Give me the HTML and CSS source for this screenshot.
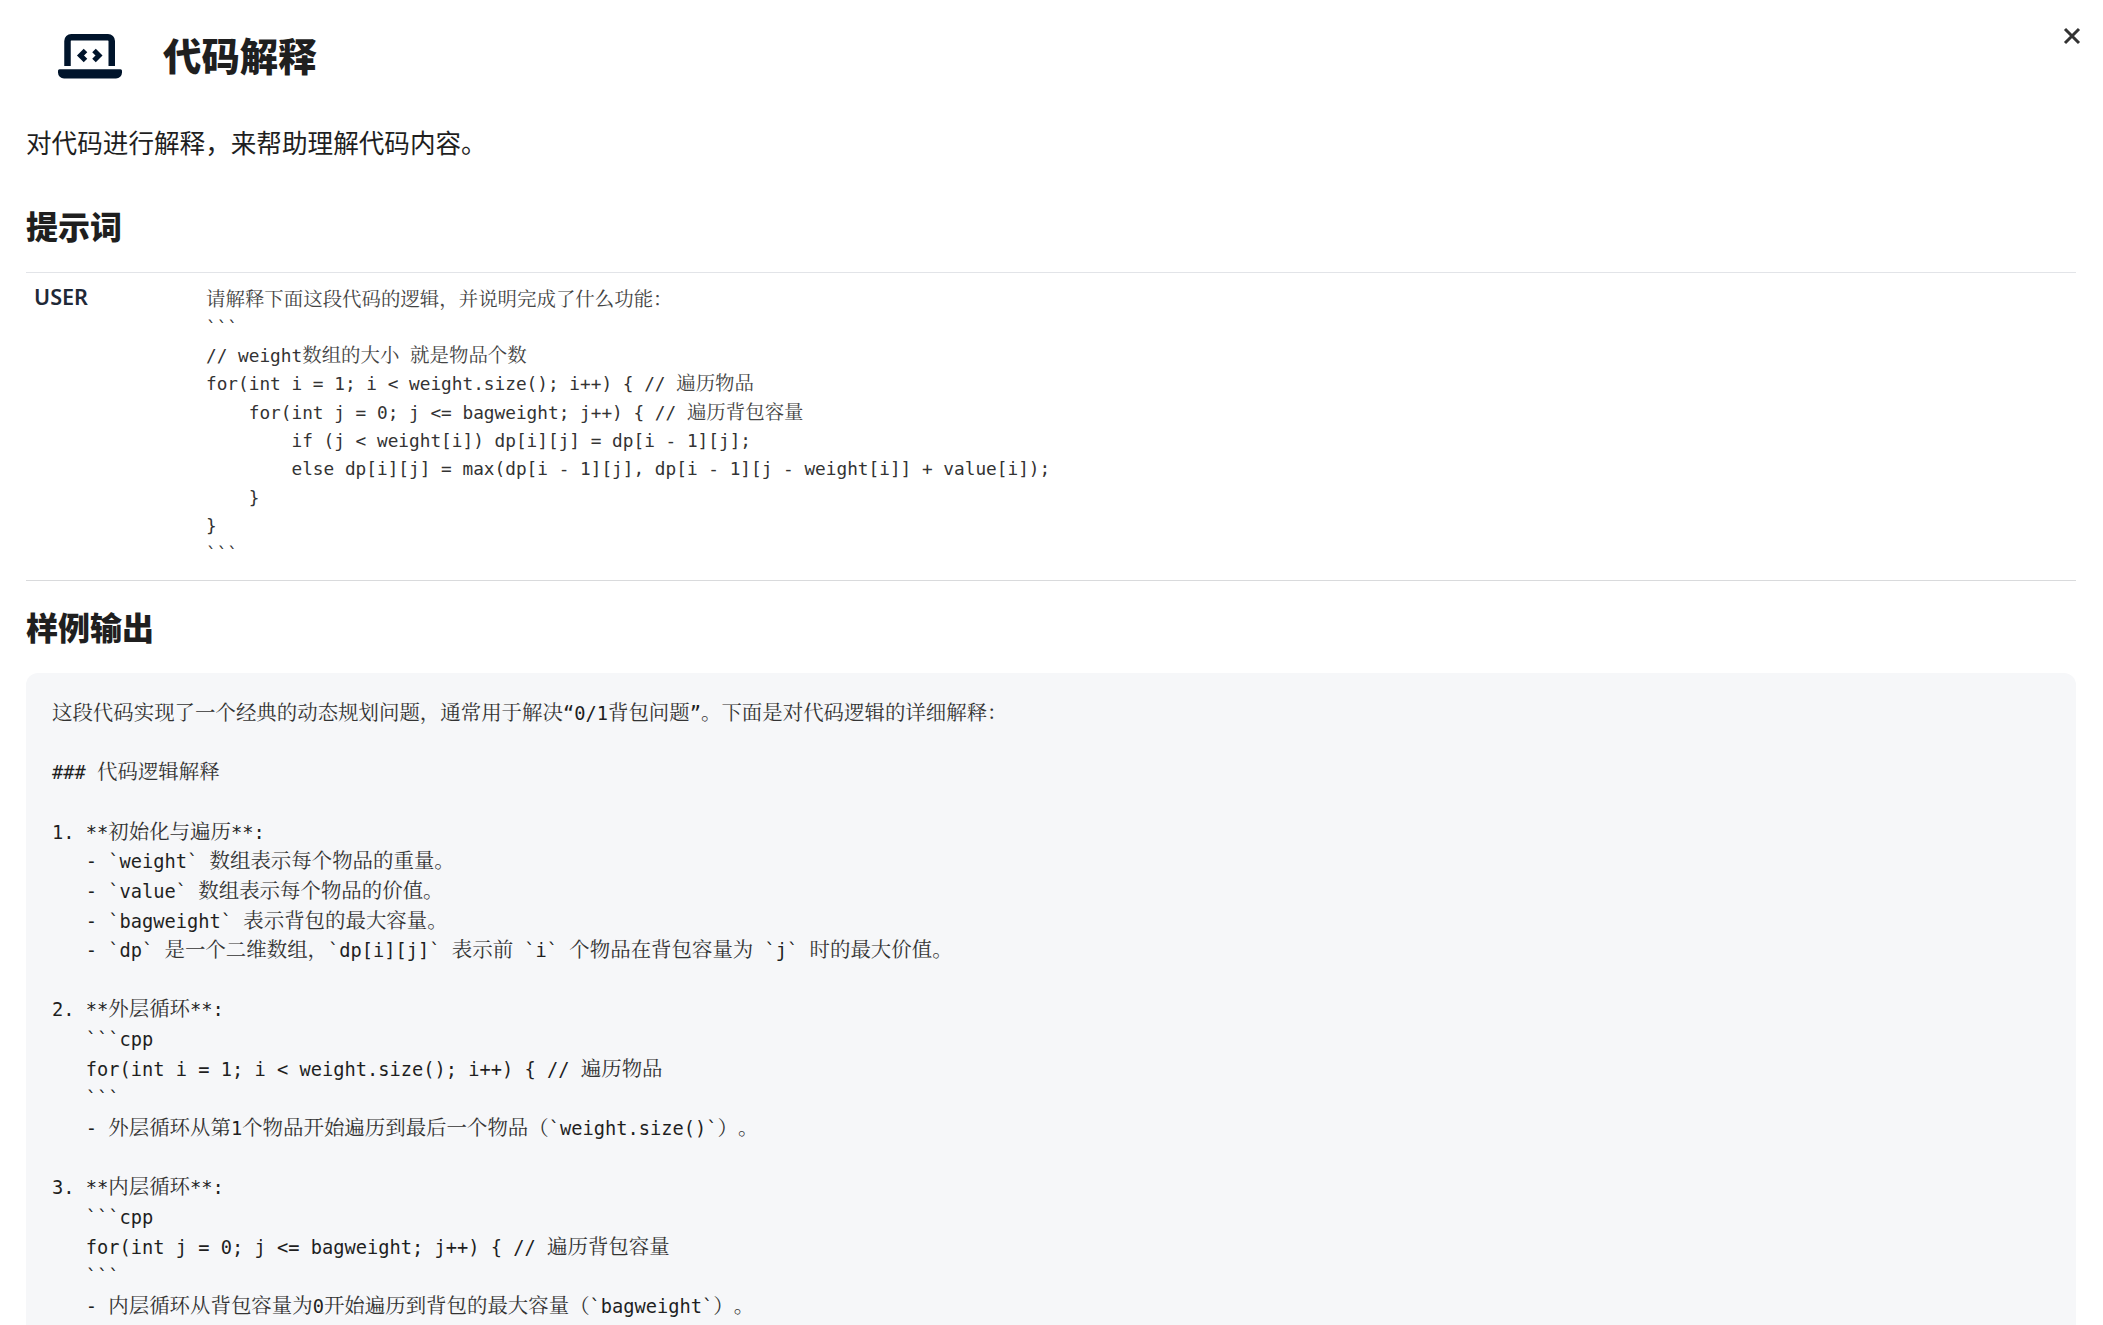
FILE: index.html
```html
<!DOCTYPE html>
<html lang="zh-CN">
<head>
<meta charset="utf-8">
<title>代码解释</title>
<link rel="stylesheet" href="styles.css">
</head>
<body>
<main class="page">
  <button class="close" type="button" aria-label="关闭">
    <svg viewBox="0 0 18 18" width="18" height="18"><path d="M2 2 16 16M16 2 2 16" fill="none" stroke="#333" stroke-width="3"/></svg>
  </button>
  <header class="head">
    <span class="logo">
      <svg viewBox="0 0 64 46" width="64" height="46">
        <path d="M9.500 33V8a3.750 3.750 0 0 1 3.750-3.750h36.750a3.750 3.750 0 0 1 3.750 3.750V33" fill="none" stroke="#00142b" stroke-width="6.500"/>
        <path d="M1.500 36.300h61a1.500 1.500 0 0 1 1.500 1.500v1.700a6 6 0 0 1-6 6H6a6 6 0 0 1-6-6v-1.700a1.500 1.500 0 0 1 1.500-1.500z" fill="#00142b"/>
        <path d="M27.500 17.500l-5 5 5 5M36 17.500l5 5-5 5" fill="none" stroke="#00142b" stroke-width="5"/>
      </svg>
    </span>
    <h1 class="title">代码解释</h1>
  </header>
  <p class="desc">对代码进行解释，来帮助理解代码内容。</p>
  <h2 class="section">提示词</h2>
  <div class="prompt">
    <div class="role">USER</div>
    <div class="code">
      <div class="ln"><i>请解释下面这段代码的逻辑，并说明完成了什么功能：</i></div>
      <div class="ln">&#96;&#96;&#96;</div>
      <div class="ln">// weight<i>数组的大小</i> <i>就是物品个数</i></div>
      <div class="ln">for(int i = 1; i &lt; weight.size(); i++) { // <i>遍历物品</i></div>
      <div class="ln">    for(int j = 0; j &lt;= bagweight; j++) { // <i>遍历背包容量</i></div>
      <div class="ln">        if (j &lt; weight[i]) dp[i][j] = dp[i - 1][j];</div>
      <div class="ln">        else dp[i][j] = max(dp[i - 1][j], dp[i - 1][j - weight[i]] + value[i]);</div>
      <div class="ln">    }</div>
      <div class="ln">}</div>
      <div class="ln">&#96;&#96;&#96;</div>
    </div>
  </div>
  <h2 class="section output">样例输出</h2>
  <div class="sample">
    <div class="ln"><i>这段代码实现了一个经典的动态规划问题，通常用于解决</i>“0/1<i>背包问题</i>”<i>。下面是对代码逻辑的详细解释：</i></div>
    <div class="ln"></div>
    <div class="ln">### <i>代码逻辑解释</i></div>
    <div class="ln"></div>
    <div class="ln">1. **<i>初始化与遍历</i>**:</div>
    <div class="ln">   - &#96;weight&#96; <i>数组表示每个物品的重量。</i></div>
    <div class="ln">   - &#96;value&#96; <i>数组表示每个物品的价值。</i></div>
    <div class="ln">   - &#96;bagweight&#96; <i>表示背包的最大容量。</i></div>
    <div class="ln">   - &#96;dp&#96; <i>是一个二维数组，</i>&#96;dp[i][j]&#96; <i>表示前</i> &#96;i&#96; <i>个物品在背包容量为</i> &#96;j&#96; <i>时的最大价值。</i></div>
    <div class="ln"></div>
    <div class="ln">2. **<i>外层循环</i>**:</div>
    <div class="ln">   &#96;&#96;&#96;cpp</div>
    <div class="ln">   for(int i = 1; i &lt; weight.size(); i++) { // <i>遍历物品</i></div>
    <div class="ln">   &#96;&#96;&#96;</div>
    <div class="ln">   - <i>外层循环从第</i>1<i>个物品开始遍历到最后一个物品（</i>&#96;weight.size()&#96;<i>）。</i></div>
    <div class="ln"></div>
    <div class="ln">3. **<i>内层循环</i>**:</div>
    <div class="ln">   &#96;&#96;&#96;cpp</div>
    <div class="ln">   for(int j = 0; j &lt;= bagweight; j++) { // <i>遍历背包容量</i></div>
    <div class="ln">   &#96;&#96;&#96;</div>
    <div class="ln">   - <i>内层循环从背包容量为</i>0<i>开始遍历到背包的最大容量（</i>&#96;bagweight&#96;<i>）。</i></div>
  </div>
</main>
</body>
</html>
```
FILE: styles.css
```css
* { box-sizing: border-box; }
html, body { margin: 0; height: 100%; overflow: hidden; background: #fff; }
body { font-family: "Noto Sans", "Noto Sans CJK SC", sans-serif; color: #1f1f1f; }
.page { position: relative; height: 100%; padding: 20px 27px 0 26px; }
.close { position: absolute; top: 27px; right: 22px; width: 18px; height: 18px; padding: 0; border: 0; background: none; line-height: 0; }
.head { display: flex; align-items: center; height: 72px; padding-left: 32px; }
.logo { display: block; width: 64px; height: 46px; margin-right: 41px; line-height: 0; }
.title { margin: 0; font-size: 38.400px; line-height: 72px; font-weight: 900; }
.desc { margin: 35px 0 0; font-size: 25.600px; line-height: 34px; }
.section { margin: 42px 0 0; font-size: 32px; line-height: 48px; font-weight: 900; }
.prompt { display: grid; grid-template-columns: 180px 1fr; margin-top: 21px; padding: 12.500px 0 11.500px; border-top: 1px solid #e2e4e8; border-bottom: 1px solid #d9dadc; }
.role { padding-left: 8px; margin-top: -2.500px; font-size: 21.600px; line-height: 28px; font-weight: 600; color: #1f2937; }
.code, .sample { font-family: "DejaVu Sans Mono", monospace; }
.ln { white-space: pre; min-height: 1lh; }
.ln i { font-style: normal; font-family: "Noto Serif CJK SC", "Noto Sans CJK SC", serif; line-height: 0; text-spacing-trim: space-all; }
.code { font-size: 17.750px; line-height: 28.300px; color: #333; }
.code i { font-size: 19.450px; color: #444; }
.output { margin-top: 23px; }
.sample { margin-top: 21px; padding: 26px 26px 0; height: 652px; border-radius: 12px 12px 0 0; background: #f6f7f9; overflow: hidden; font-size: 18.700px; line-height: 29.650px; color: #1f1f1f; }
.sample i { font-size: 20.450px; color: #333; }
```
